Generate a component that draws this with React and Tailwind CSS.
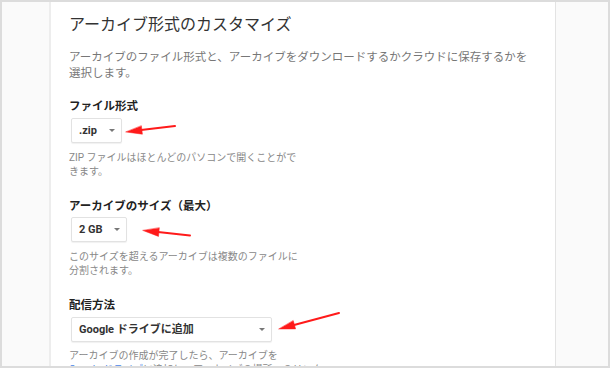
import React from "react";

const font = { fontFamily: '"Roboto", "Noto Sans CJK JP", sans-serif' };

function Select({ width, label }) {
  return (
    <div
      className={`${width} h-[25px] ml-[2px] flex items-center justify-between pl-[7px] pr-[6px] bg-white border border-[#e2e2e2] rounded-[2px] shadow-[0_1px_1px_rgba(0,0,0,0.06)]`}
    >
      <span className="text-[11px] font-bold text-[#333] leading-none">{label}</span>
      <span className="w-0 h-0 border-l-[3px] border-r-[3px] border-t-[3px] border-l-transparent border-r-transparent border-t-[#777]" />
    </div>
  );
}

function Arrows() {
  return (
    <svg className="absolute left-0 top-0" width="610" height="368" viewBox="0 0 610 368">
      <g fill="#ff1a1a" stroke="#ff1a1a" strokeLinecap="round">
        <line x1="139" y1="128" x2="173" y2="124" strokeWidth="2" />
        <polygon points="124,130 140.4,132.2 139.4,124" strokeWidth="0.5" />
        <line x1="156" y1="230" x2="188" y2="233.5" strokeWidth="2" />
        <polygon points="141,228.5 156.5,234.4 157.3,226" strokeWidth="0.5" />
        <line x1="292" y1="323" x2="337" y2="311" strokeWidth="2" />
        <polygon points="277,327 293.6,326.9 291.3,318.8" strokeWidth="0.5" />
      </g>
    </svg>
  );
}

export default function App() {
  return (
    <div
      className="relative w-[610px] h-[368px] overflow-hidden border-2 border-[#dcdcdc] bg-[#fafafa] flex"
      style={font}
    >
      <div className="w-[47px] shrink-0" />
      <div className="w-[507px] shrink-0 bg-white border-l-2 border-[#ededed] border-r border-r-[#e3e3e3] pl-[18px] pt-[13px]">
        <h1 className="text-[16px] leading-[20px] text-[#333] font-normal">アーカイブ形式のカスタマイズ</h1>
        <p className="mt-[14px] text-[11.5px] leading-[16px] text-[#777] whitespace-nowrap">
          アーカイブのファイル形式と、アーカイブをダウンロードするかクラウドに保存するかを
          <br />
          選択します。
        </p>

        <h2 className="mt-[17px] text-[11.5px] leading-[16px] font-bold text-[#222]">ファイル形式</h2>
        <div className="mt-[4px]">
          <Select width="w-[51px]" label=".zip" />
        </div>
        <p className="mt-[8px] text-[10px] leading-[14px] text-[#888] whitespace-nowrap">
          ZIP ファイルはほとんどのパソコンで開くことがで
          <br />
          きます。
        </p>

        <h2 className="mt-[19px] text-[11.5px] leading-[16px] font-bold text-[#222]">アーカイブのサイズ（最大）</h2>
        <div className="mt-[3px]">
          <Select width="w-[56px]" label="2 GB" />
        </div>
        <p className="mt-[8px] text-[10px] leading-[14px] text-[#888] whitespace-nowrap">
          このサイズを超えるアーカイブは複数のファイルに
          <br />
          分割されます。
        </p>

        <h2 className="mt-[19px] text-[11.5px] leading-[16px] font-bold text-[#222]">配信方法</h2>
        <div className="mt-[4px]">
          <Select width="w-[201px]" label="Google ドライブに追加" />
        </div>
        <p className="mt-[7px] text-[10px] leading-[14px] text-[#888] whitespace-nowrap">
          アーカイブの作成が完了したら、アーカイブを
          <br />
          <span className="text-[#4a86e8]">Google ドライブ</span>に追加し、アーカイブの場所へのリンク
        </p>
      </div>
      <div className="flex-1" />
      <Arrows />
    </div>
  );
}
